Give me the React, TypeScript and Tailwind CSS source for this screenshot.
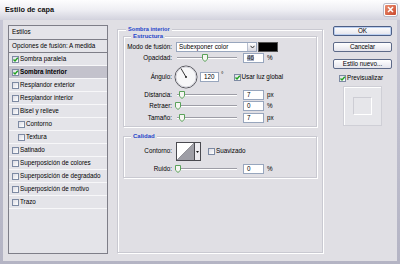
import React from "react";

const FONT = "font-['Liberation_Sans',Arial,sans-serif]";

function Check({ checked = false }: { checked?: boolean }) {
  return (
    <div className="relative w-[7px] h-[7px] shrink-0 border border-[#7d8aa3] bg-gradient-to-br from-[#dcdce4] to-white">
      {checked && (
        <svg className="absolute -left-[1px] -top-[1px]" width="7" height="7" viewBox="0 0 7 7">
          <path d="M1.5 3.5 L3 5 L5.8 1.8" fill="none" stroke="#21a121" strokeWidth="1.4" />
        </svg>
      )}
    </div>
  );
}

function Slider({ pos }: { pos: number }) {
  return (
    <div className="relative w-[60px] h-[10px] flex items-center shrink-0">
      <div className="w-full h-[2px] border-t border-[#9d9da6] border-b border-b-white" />
      <svg className="absolute top-[1px]" style={{ left: pos - 3 }} width="6" height="8" viewBox="0 0 6 8">
        <path d="M0.5 0.5 H5.5 V5.2 L3 7.5 L0.5 5.2 Z" fill="#f6f6f2" stroke="#5aa25a" strokeWidth="1" />
      </svg>
    </div>
  );
}

function Field({ v, sel = false, w = "w-[21px]" }: { v: string; sel?: boolean; w?: string }) {
  return (
    <div className={`${w} h-[10px] shrink-0 bg-white border border-[#98a6bd] flex items-center pl-[3px] text-[6.3px] leading-none`}>
      {sel ? <span className="bg-[#a7b0c6] text-[#333]">{v}</span> : v}
    </div>
  );
}

function Label({ children }: { children: React.ReactNode }) {
  return <div className="w-[48px] shrink-0 text-right text-[6.3px] leading-none">{children}</div>;
}

function Group({ title, left, titleSize, className, children }: { title: string; left: string; titleSize: string; className: string; children?: React.ReactNode }) {
  return (
    <div className={`relative border border-[#c9c9d1] shadow-[inset_1px_1px_0_#ffffff,1px_1px_0_#ffffff] ${className}`}>
      <span className={`absolute -top-[4px] ${left} px-[2px] bg-[#e0dfe4] ${titleSize} leading-[7px] font-bold text-[#1f45c9]`}>{title}</span>
      {children}
    </div>
  );
}

const items: { label: string; checked?: boolean; active?: boolean; indent?: boolean }[] = [
  { label: "Sombra paralela", checked: true },
  { label: "Sombra interior", checked: true, active: true },
  { label: "Resplandor exterior" },
  { label: "Resplandor interior" },
  { label: "Bisel y relieve" },
  { label: "Contorno", indent: true },
  { label: "Textura", indent: true },
  { label: "Satinado" },
  { label: "Superposición de colores" },
  { label: "Superposición de degradado" },
  { label: "Superposición de motivo" },
  { label: "Trazo" },
];

export default function App() {
  return (
    <div className={`w-[400px] h-[264px] overflow-hidden flex flex-col bg-gradient-to-b from-[#c8c8d6] to-[#b4b4c4] text-black ${FONT}`}>
      {/* Title bar */}
      <div className="h-[20px] shrink-0 flex items-center pl-[5px] pr-[3px] bg-gradient-to-b from-[#fdfdfe] via-[#eeeef3] to-[#d2d2dd]">
        <span className="text-[7.3px] font-bold leading-none text-[#111]">Estilo de capa</span>
        <div className="ml-auto mt-[-1px] w-[13px] h-[12px] rounded-[2px] border border-white bg-gradient-to-br from-[#e98d6f] to-[#c9462c] flex items-center justify-center shadow-[0_0_0_1px_#b8b8c6]">
          <svg width="7" height="7" viewBox="0 0 7 7">
            <path d="M1 1 L6 6 M6 1 L1 6" stroke="white" strokeWidth="1.5" />
          </svg>
        </div>
      </div>

      {/* Body */}
      <div className="flex-1 mx-[3px] mb-[3px] bg-[#e0dfe4] flex pt-[5px] pl-[5px]">
        {/* Left list */}
        <div className="w-[100px] h-[229px] shrink-0 border border-[#7e7e88] bg-[#e4e4e9] flex flex-col">
          <div className="h-[14px] shrink-0 border-b border-[#7e7e88] flex items-center pl-[3px] text-[6.3px] leading-none">Estilos</div>
          <div className="h-[13px] shrink-0 border-b border-[#7e7e88] flex items-center pl-[3px] text-[6.3px] leading-none">Opciones de fusión: A medida</div>
          {items.map((it) => (
            <div
              key={it.label}
              className={`h-[13px] shrink-0 border-b border-[#f7f7f9] flex items-center text-[6.3px] leading-none ${it.indent ? "pl-[9px]" : "pl-[3px]"} ${it.active ? "bg-[#c3c2cc] font-bold" : ""}`}
            >
              <Check checked={it.checked} />
              <span className="ml-[1px]">{it.label}</span>
            </div>
          ))}
        </div>

        {/* Middle */}
        <Group title="Sombra interior" left="left-[8px]" titleSize="text-[5.6px]" className="ml-[9px] mt-[4px] w-[206px] h-[224px] shrink-0 pt-[6px] px-[5px]">
          <Group title="Estructura" left="left-[7px]" titleSize="text-[6px]" className="h-[91px] pt-[5px]">
            {/* Modo */}
            <div className="flex items-center h-[10px]">
              <Label>Modo de fusión:</Label>
              <div className="ml-[4px] w-[81px] h-[10px] bg-white border border-[#98a6bd] flex items-center text-[6.3px] leading-none">
                <span className="pl-[2px] flex-1">Subexponer color</span>
                <div className="w-[9px] h-[8px] mr-[0px] bg-gradient-to-b from-white to-[#d6d6de] border-l border-[#b8bfcf] flex items-center justify-center">
                  <svg width="5" height="4" viewBox="0 0 5 4"><path d="M0.5 0.8 L2.5 3 L4.5 0.8" fill="none" stroke="#333" strokeWidth="1" /></svg>
                </div>
              </div>
              <div className="ml-[1px] w-[20px] h-[10px] bg-black border border-[#555]" />
            </div>
            {/* Opacidad */}
            <div className="flex items-center h-[10px] mt-[1px]">
              <Label>Opacidad:</Label>
              <div className="ml-[5px]"><Slider pos={28} /></div>
              <div className="ml-[6px]"><Field v="46" sel /></div>
              <span className="ml-[3px] text-[6.3px] leading-none">%</span>
            </div>
            {/* Ángulo */}
            <div className="flex items-center h-[24px] mt-[2px]">
              <Label>Ángulo:</Label>
              <svg className="ml-[2px] shrink-0" width="24" height="24" viewBox="0 0 24 24">
                <circle cx="12" cy="12" r="11" fill="#f7f7f8" stroke="#55555c" strokeWidth="1" />
                <circle cx="12" cy="12" r="10" fill="none" stroke="#d3d3da" strokeWidth="1" />
                <path d="M12 12 L7 3.5" stroke="#222" strokeWidth="0.9" />
                <circle cx="12" cy="12" r="1" fill="#222" />
              </svg>
              <div className="ml-[2px]"><Field v="120" w="w-[19px]" /></div>
              <span className="ml-[2px] text-[6.3px] leading-none self-start mt-[7px]">°</span>
              <div className="ml-[10px] flex items-center">
                <Check checked />
                <span className="ml-[1px] text-[6.3px] leading-none">Usar luz global</span>
              </div>
            </div>
            {/* Distancia */}
            <div className="flex items-center h-[10px] mt-[1px]">
              <Label>Distancia:</Label>
              <div className="ml-[5px]"><Slider pos={5} /></div>
              <div className="ml-[6px]"><Field v="7" /></div>
              <span className="ml-[3px] text-[6.3px] leading-none">px</span>
            </div>
            {/* Retraer */}
            <div className="flex items-center h-[10px] mt-[1px]">
              <Label>Retraer:</Label>
              <div className="ml-[5px]"><Slider pos={1} /></div>
              <div className="ml-[6px]"><Field v="0" /></div>
              <span className="ml-[3px] text-[6.3px] leading-none">%</span>
            </div>
            {/* Tamaño */}
            <div className="flex items-center h-[10px] mt-[2px]">
              <Label>Tamaño:</Label>
              <div className="ml-[5px]"><Slider pos={5} /></div>
              <div className="ml-[6px]"><Field v="7" /></div>
              <span className="ml-[3px] text-[6.3px] leading-none">px</span>
            </div>
          </Group>

          <Group title="Calidad" left="left-[7px]" titleSize="text-[6px]" className="mt-[9px] h-[42px] pt-[5px]">
            <div className="flex items-center h-[19px]">
              <Label>Contorno:</Label>
              <div className="ml-[4px] w-[25px] h-[19px] border border-[#4a4a50] bg-white flex">
                <svg width="17" height="17" viewBox="0 0 17 17">
                  <path d="M0 17 L17 0 L17 17 Z" fill="#9e9ea6" />
                  <path d="M0 17 L17 0" stroke="#6d6d74" strokeWidth="0.6" />
                </svg>
                <div className="flex-1 border-l border-[#4a4a50] bg-[#ecebf0] flex items-center justify-center">
                  <svg width="3" height="2" viewBox="0 0 3 2"><path d="M0 0 H3 L1.5 2 Z" fill="#111" /></svg>
                </div>
              </div>
              <div className="ml-[7px] flex items-center">
                <Check />
                <span className="ml-[1px] text-[6.3px] leading-none">Suavizado</span>
              </div>
            </div>
            <div className="flex items-center h-[10px] mt-[3px]">
              <Label>Ruido:</Label>
              <div className="ml-[5px]"><Slider pos={1} /></div>
              <div className="ml-[6px]"><Field v="0" /></div>
              <span className="ml-[3px] text-[6.3px] leading-none">%</span>
            </div>
          </Group>
        </Group>

        {/* Right column */}
        <div className="ml-[10px] mt-[1px] w-[59px] flex flex-col items-stretch shrink-0">
          <div className="h-[10px] rounded-[2px] border border-[#4d5f86] bg-gradient-to-b from-white to-[#e4e4ec] shadow-[inset_0_0_0_1px_#bcd0f0] flex items-center justify-center text-[6.3px] leading-none">OK</div>
          <div className="mt-[6px] h-[10px] rounded-[2px] border border-[#5d6a88] bg-gradient-to-b from-white to-[#e4e4ec] flex items-center justify-center text-[6.3px] leading-none">Cancelar</div>
          <div className="mt-[7px] h-[10px] rounded-[2px] border border-[#5d6a88] bg-gradient-to-b from-white to-[#e4e4ec] flex items-center justify-center text-[6.3px] leading-none">Estilo nuevo...</div>
          <div className="mt-[6px] flex items-center pl-[6px]">
            <Check checked />
            <span className="ml-[1px] text-[6.3px] leading-none">Previsualizar</span>
          </div>
          <div className="mt-[4px] ml-[10px] w-[39px] h-[40px] border border-[#cfcfd6] shadow-[inset_1px_1px_0_#ffffff] bg-[#e6e6ea] flex items-center justify-center">
            <div className="w-[19px] h-[18px] border-t border-l border-[#cdcdd4] border-b border-r border-b-white border-r-white" />
          </div>
        </div>
      </div>
    </div>
  );
}
